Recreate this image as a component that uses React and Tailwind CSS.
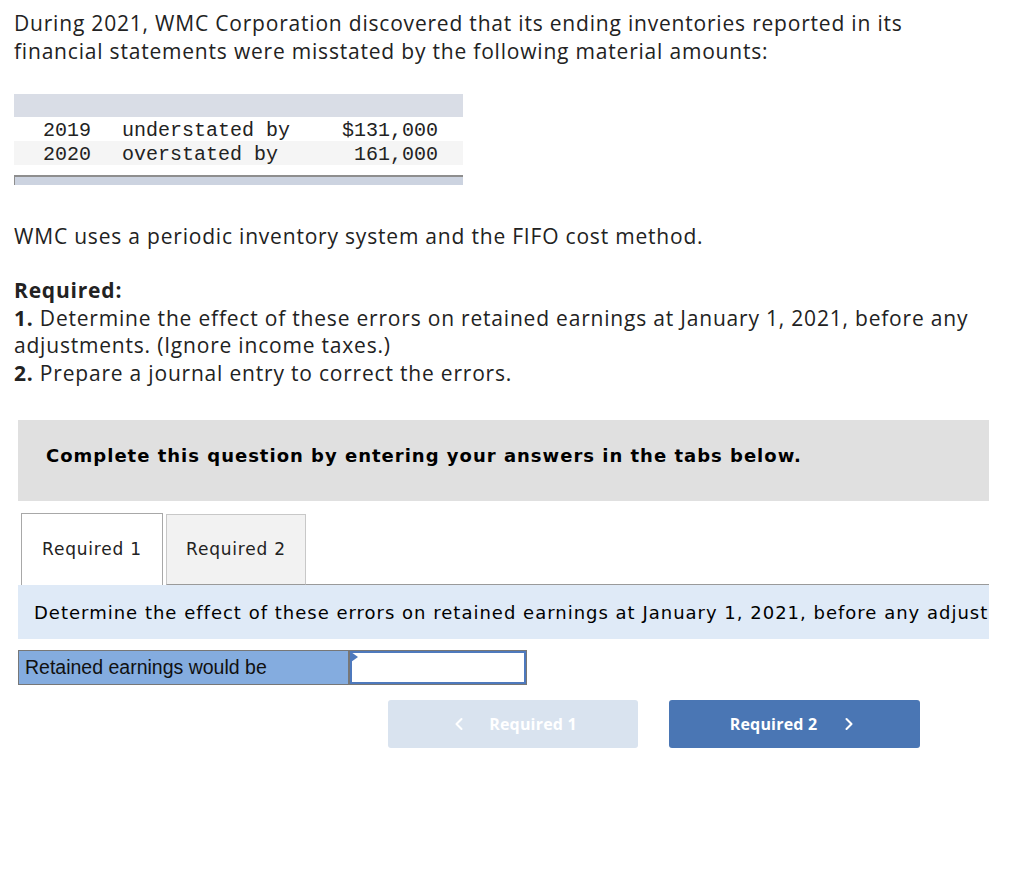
import React from 'react';
import { ChevronLeft, ChevronRight } from 'lucide-react';

const body = { fontFamily: '"Open Sans", Lato, sans-serif' };
const verdana = { fontFamily: '"DejaVu Sans", Verdana, sans-serif' };

const App = () => {
  const rows = [
    { year: '2019', text: 'understated by', amount: '$131,000', bg: 'bg-white' },
    { year: '2020', text: 'overstated by', amount: '161,000', bg: 'bg-[#f5f5f5]' },
  ];

  return (
    <div className="w-[1024px] h-[877px] bg-white text-[#222]" style={body}>
      {/* Intro */}
      <div className="pl-[14px] pt-[9px] text-[21px] tracking-[0.8px] leading-[28px]">
        <p>During 2021, WMC Corporation discovered that its ending inventories reported in its</p>
        <p>financial statements were misstated by the following material amounts:</p>
      </div>

      {/* Table */}
      <div className="ml-[14px] mt-[29px] w-[449px]">
        <div className="h-[23px] bg-[#d9dde6]" />
        {rows.map((r) => (
          <div
            key={r.year}
            className={`flex items-center h-[24px] pt-[4px] ${r.bg} text-[20px] text-[#222] whitespace-nowrap`}
            style={{ fontFamily: '"Liberation Mono", monospace' }}
          >
            <span className="w-[77px] text-right">{r.year}</span>
            <span className="ml-[31px] w-[175px]">{r.text}</span>
            <span className="w-[141px] text-right">{r.amount}</span>
          </div>
        ))}
        <div className="mt-[10px] h-[10px] bg-[#ccd3e0] border-t-2 border-l border-[#8e8e8e]" />
      </div>

      <p className="pl-[14px] mt-[37px] text-[21px] tracking-[0.8px] leading-[28px]">
        WMC uses a periodic inventory system and the FIFO cost method.
      </p>

      <div className="pl-[14px] mt-[27px] text-[21px] tracking-[0.8px] leading-[27.5px]">
        <p className="font-bold">Required:</p>
        <p>
          <span className="font-bold">1.</span> Determine the effect of these errors on retained earnings at January 1, 2021, before any
        </p>
        <p>adjustments. (Ignore income taxes.)</p>
        <p>
          <span className="font-bold">2.</span> Prepare a journal entry to correct the errors.
        </p>
      </div>

      {/* Instruction box */}
      <div className="ml-[18px] mt-[33px] w-[971px] h-[81px] bg-[#e0e0e0] pl-[28px] pt-[22px]">
        <p className="font-bold text-[18px] tracking-[1px] text-black" style={verdana}>
          Complete this question by entering your answers in the tabs below.
        </p>
      </div>

      {/* Tabs */}
      <div className="ml-[18px] mt-[12px] w-[971px]" style={verdana}>
        <div className="flex items-end">
          <div className="ml-[3px] w-[142px] h-[72px] bg-white border border-b-0 border-[#a8a8a8] flex items-center justify-center text-[17px] tracking-[0.8px] text-[#222]">
            Required 1
          </div>
          <div className="ml-[3px] w-[140px] h-[71px] bg-[#f2f2f2] border border-[#c8c8c8] border-b-[#9a9a9a] flex items-center justify-center text-[17px] tracking-[0.8px] text-[#222]">
            Required 2
          </div>
          <div className="flex-1 border-b border-[#9a9a9a]" />
        </div>
        <div className="h-[54px] bg-[#dfeaf7] overflow-hidden whitespace-nowrap pl-[16px] flex items-center text-[18px] tracking-[1px] text-black">
          Determine the effect of these errors on retained earnings at January 1, 2021, before any adjust
        </div>
      </div>

      {/* Answer row */}
      <div className="ml-[18px] mt-[11px] flex h-[35px]">
        <div
          className="w-[331px] bg-[#84acdf] border border-[#777] flex items-center pl-[6px] text-[19.5px] text-[#111]"
          style={{ fontFamily: '"Liberation Sans", Arial, sans-serif' }}
        >
          Retained earnings would be
        </div>
        <div className="relative w-[178px] border border-[#777] bg-white">
          <div className="absolute inset-0 border-2 border-[#4e79bd]" />
          <div className="absolute left-[1px] top-[1px] w-0 h-0 border-t-[5px] border-b-[5px] border-l-[7px] border-t-transparent border-b-transparent border-l-[#4e79bd]" />
        </div>
      </div>

      {/* Nav buttons */}
      <div className="mt-[15px] ml-[388px] flex gap-[31px]">
        <div className="w-[250px] h-[48px] rounded-[3px] bg-[#d9e3ef] flex items-center justify-center gap-[20px] text-white font-bold text-[16px] tracking-[0.2px]">
          <ChevronLeft className="w-[20px] h-[20px]" strokeWidth={2.5} />
          <span>Required 1</span>
        </div>
        <div className="w-[251px] h-[48px] rounded-[3px] bg-[#4a76b4] flex items-center justify-center gap-[22px] text-white font-bold text-[16px] tracking-[0.2px]">
          <span>Required 2</span>
          <ChevronRight className="w-[20px] h-[20px]" strokeWidth={2.5} />
        </div>
      </div>
    </div>
  );
};

export default App;
